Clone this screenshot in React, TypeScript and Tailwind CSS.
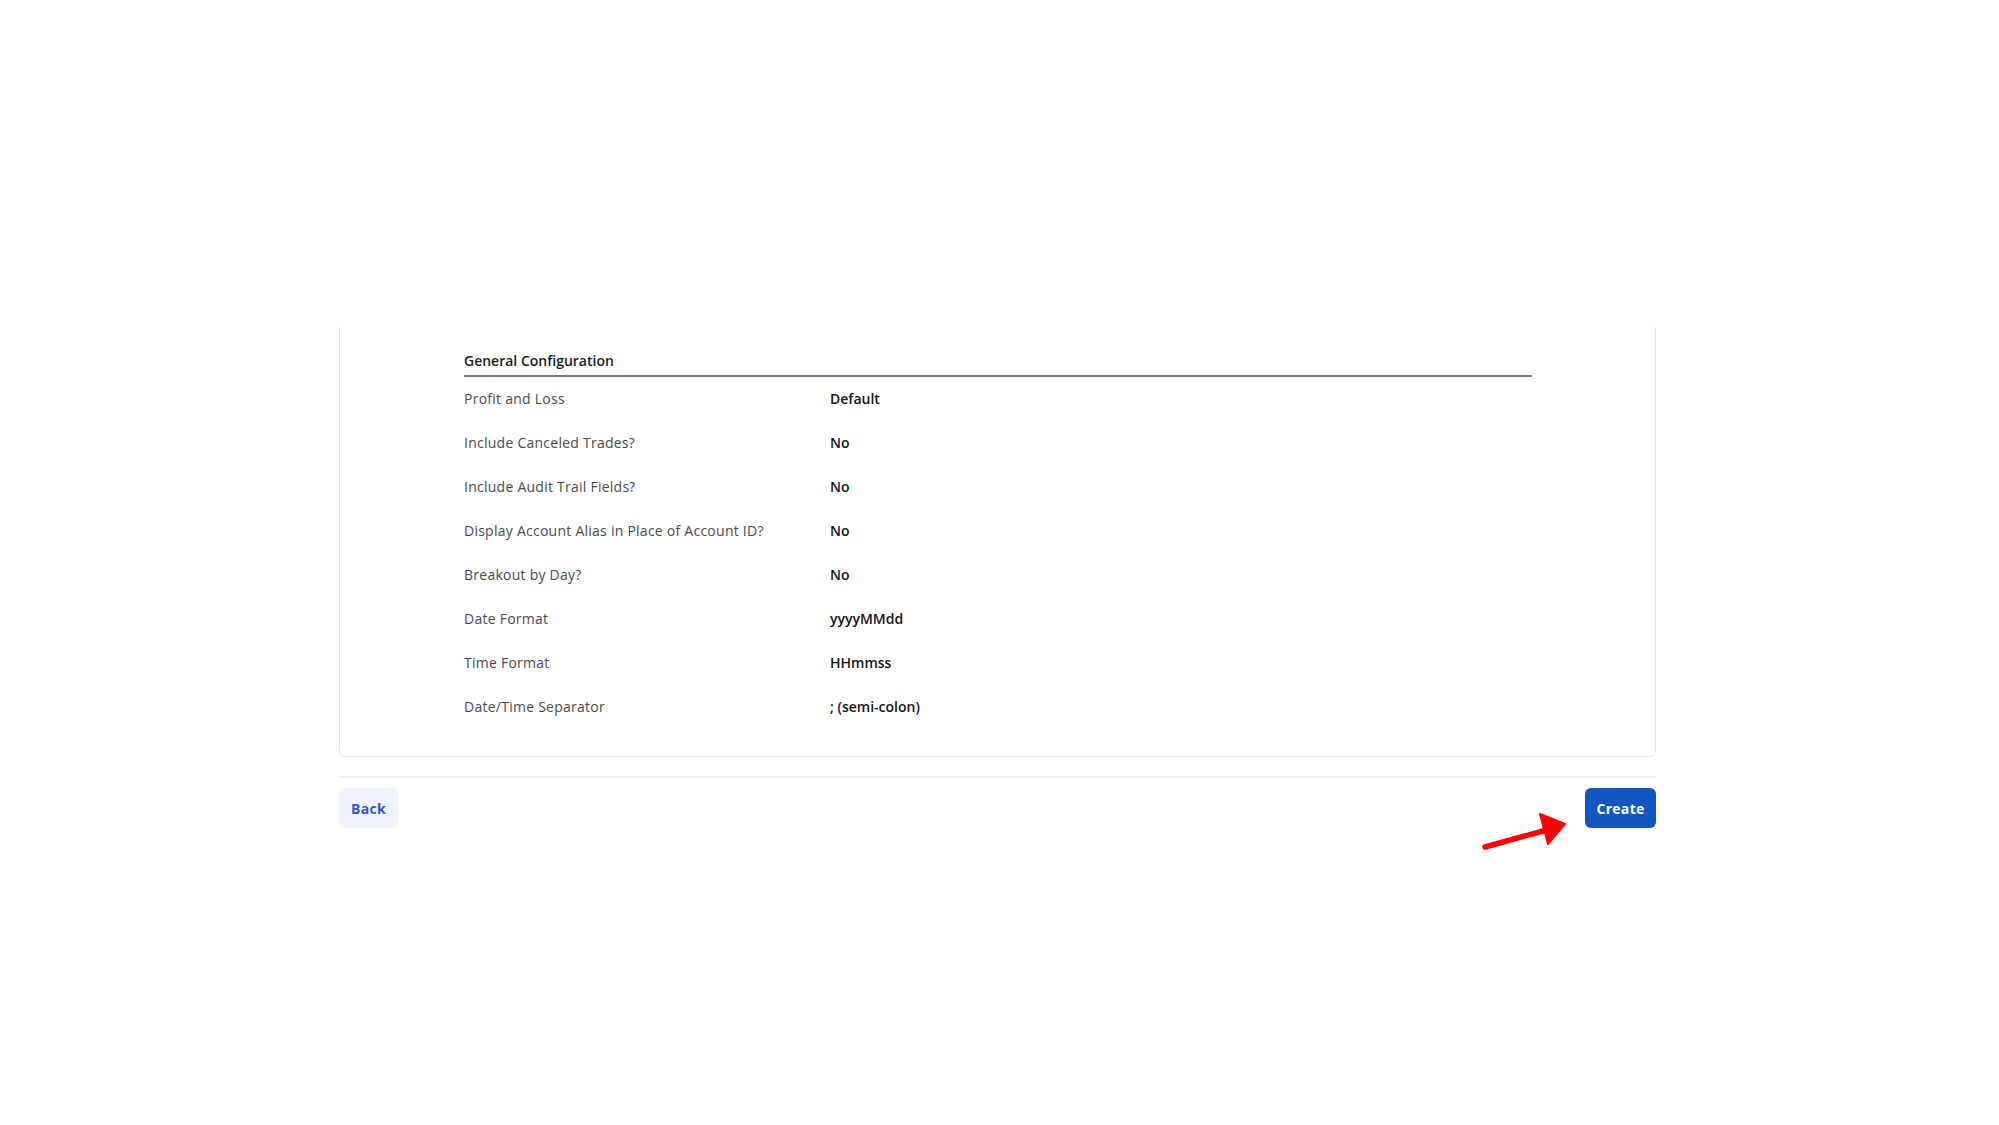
import React from "react";

const rows: [string, string][] = [
  ["Profit and Loss", "Default"],
  ["Include Canceled Trades?", "No"],
  ["Include Audit Trail Fields?", "No"],
  ["Display Account Alias in Place of Account ID?", "No"],
  ["Breakout by Day?", "No"],
  ["Date Format", "yyyyMMdd"],
  ["Time Format", "HHmmss"],
  ["Date/Time Separator", "; (semi-colon)"],
];

export default function App() {
  return (
    <div
      className="w-[1999px] h-[1125px] bg-white pt-[327px] pl-[339px]"
      style={{ fontFamily: '"Open Sans", "Liberation Sans", sans-serif' }}
    >
      <div className="w-[1317px]">
        <div className="border-x border-b border-[#e6e6e6] rounded-b-[6px] pl-[124px] pr-[123px] pt-[24px] pb-[28px]">
          <div className="text-[14px] leading-[20px] font-semibold text-[#1c1c1c]">
            General Configuration
          </div>
          <div className="mt-[4px] h-[2px] bg-[#7a7a7a]" />
          <div className="flex flex-col -mt-[1px]">
            {rows.map(([label, value]) => (
              <div key={label} className="flex items-center h-[44px] text-[14px]">
                <div className="w-[366px] text-[#4a4a4a] tracking-[0.25px]">{label}</div>
                <div className="font-semibold text-[#151515]">{value}</div>
              </div>
            ))}
          </div>
        </div>
        <div className="mt-[19px] h-[2px] bg-[#efefef]" />
        <div className="relative mt-[10px] flex justify-between">
          <button className="w-[59px] h-[40px] rounded-[6px] bg-[#eef3fd] text-[#3159c6] text-[14px] font-bold tracking-[0.3px]">
            Back
          </button>
          <button className="w-[71px] h-[40px] rounded-[6px] bg-[#1356c2] text-white text-[14px] font-bold tracking-[0.3px]">
            Create
          </button>
          <svg
            className="absolute left-[1140px] top-[20px]"
            width="90"
            height="45"
            viewBox="0 0 90 45"
          >
            <line x1="6" y1="39" x2="64" y2="23" stroke="#ff0000" strokeWidth="5.5" strokeLinecap="round" />
            <polygon points="61,6 86,16 69,36" fill="#ff0000" stroke="#ff0000" strokeWidth="2" strokeLinejoin="round" />
          </svg>
        </div>
      </div>
    </div>
  );
}
